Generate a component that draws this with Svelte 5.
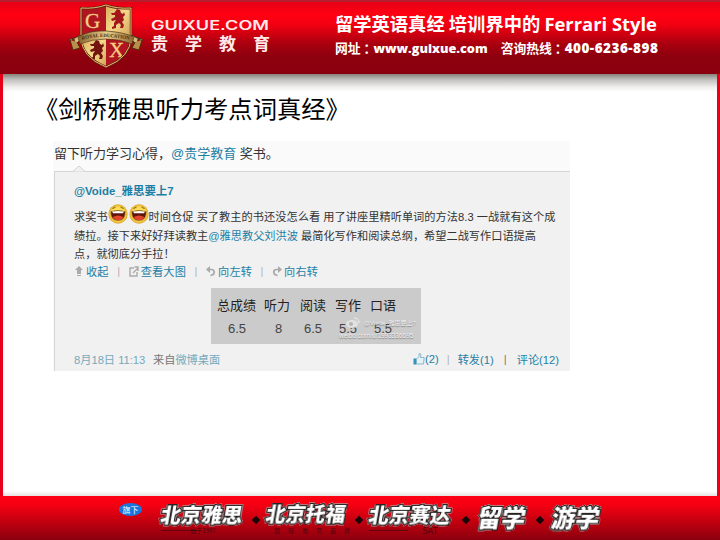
<script lang="ts">
  type Score = { label: string; value: string; width: number };
  type Course = { name: string; note: string; kind: string };

  const scores: Score[] = [
    { label: "总成绩", value: "6.5", width: 47 },
    { label: "听力", value: "8", width: 36 },
    { label: "阅读", value: "6.5", width: 35 },
    { label: "写作", value: "5.5", width: 35 },
    { label: "口语", value: "5.5", width: 35 },
  ];

  const courses: Course[] = [
    { name: "北京雅思", note: "始于1997", kind: "ielts" },
    { name: "北京托福", note: "国际教育品牌", kind: "toefl" },
    { name: "北京赛达", note: "SAT", kind: "sat" },
    { name: "留学", note: "", kind: "big" },
    { name: "游学", note: "", kind: "big" },
  ];
</script>

{#snippet lion(x: number, y: number)}
  <path
    transform="translate({x} {y})"
    d="M5 0l3 1 1 3 2 1 1-2 1 3-2 2 1 3-2 2 2 3-1 3-3 0 1-3-2-2-3 2 0 3-4 1 0-2 2-1 0-3 2-3-4 1-1-2 2-1 2-1 0-2-3 0-1-2 3 0 1-1z"
  />
{/snippet}

{#snippet laugh()}
  <svg class="face" width="20" height="20" viewBox="0 0 20 20">
    <circle cx="10" cy="10" r="9.700" fill="url(#skin)" />
    <path d="M4.500 4.500l3-1.300M15.500 4.500l-3-1.300" fill="none" stroke="#8a5a18" stroke-width="1" />
    <path d="M2.800 7.500Q10 5.500 17.200 7.500 17.500 16.500 10 16.500T2.800 7.500z" fill="#5f150c" stroke="#a0701c" stroke-width=".6" />
    <path d="M4 7.600Q10 6.200 16 7.600L15 9.200H5z" fill="#fff" />
    <path d="M4.800 13q5.200-3 10.400 0-1.500 3.200-5.200 3.200T4.800 13z" fill="#e2452c" />
  </svg>
{/snippet}

<div class="page">
  <header>
    <svg class="crest" width="76" height="66" viewBox="0 0 76 66">
      <defs>
        <linearGradient id="gold" x2="1" y2="1">
          <stop offset="0" stop-color="#b77d2b" />
          <stop offset=".5" stop-color="#f6d98a" />
          <stop offset="1" stop-color="#a66b22" />
        </linearGradient>
        <linearGradient id="ribbon">
          <stop offset="0" stop-color="#86622d" />
          <stop offset=".5" stop-color="#e9cf8a" />
          <stop offset="1" stop-color="#8c6732" />
        </linearGradient>
        <radialGradient id="skin">
          <stop offset="0" stop-color="#ffec70" />
          <stop offset=".7" stop-color="#fbdc50" />
          <stop offset="1" stop-color="#dba62b" />
        </radialGradient>
        <clipPath id="shield">
          <path d="M12 4Q26 5 37 1 48 5 62 4V33Q62 53 37 63 12 53 12 33z" />
        </clipPath>
      </defs>
      <g clip-path="url(#shield)">
        <path d="M12 0h25v32H12zM37 32h25v32H37z" fill="#b01520" />
        <path d="M37 0h25v32H37zM12 32h25v32H12z" fill="url(#gold)" />
        <g fill="#a3161b">{@render lion(43, 5)}</g>
        <g fill="#741410">{@render lion(22, 36)}</g>
        <text class="initial" x="16" y="24">G</text>
        <text class="initial" x="40" y="53">X</text>
      </g>
      <path d="M12 4Q26 5 37 1 48 5 62 4V33Q62 53 37 63 12 53 12 33z" fill="none" stroke="#64200f" stroke-width="2.4" />
      <path d="M12 4Q26 5 37 1 48 5 62 4V33Q62 53 37 63 12 53 12 33z" fill="none" stroke="#e5bd72" />
      <path d="M0 37l5-2 1 6 7-7-2-3-5 3-5 1zM74 37l-5-2-1 6-7-7 2-3 5 3 5 1z" fill="#d7bd7d" stroke="#4c2d15" />
      <path d="M1 36l3 10 7-2-3-6M73 36l-3 10-7-2 3-6" fill="#b88e49" stroke="#4c2d15" />
      <path d="M9 33Q20 26 37 27T65 33L63 40Q51 35 37 35T11 40z" fill="url(#ribbon)" stroke="#593815" stroke-width=".7" />
      <path id="arc" d="M13 36Q25 32.500 37 33T62 36" fill="none" />
      <text class="motto"><textPath href="#arc" textLength="48">ROYAL EDUCATION</textPath></text>
    </svg>
    <div class="brand">
      <svg class="domain_box" width="120" height="12" viewBox="0 0 120 12">
        <text class="domain" x="0" y="11.500" textLength="118" lengthAdjust="spacingAndGlyphs">GUIXUE.COM</text>
      </svg>
      <span class="brand_name">贵学教育</span>
    </div>
    <div class="slogan">
      <strong>留学英语真经 培训界中的 <span class="latin">Ferrari Style</span></strong>
      <p><span>网址<em>：</em><b>www.guixue.com</b></span><span>咨询热线<em>：</em><b class="phone">400-6236-898</b></span></p>
    </div>
  </header>

  <main>
    <h1>《剑桥雅思听力考点词真经》</h1>
    <section class="weibo">
      <p class="lead">留下听力学习心得，<a>@贵学教育</a> 奖书。</p>
      <article>
        <svg class="notch" width="12" height="7" viewBox="0 0 12 7">
          <path d="M0 6.5L6 1l6 5.5" fill="#f1f1f1" stroke="#d2d2d2" />
        </svg>
        <a class="author">@Voide_雅思要上7</a>
        <div class="post">
          <p class="first"><span>求奖书</span>{@render laugh()}{@render laugh()}<span class="fit">时间仓促 买了教主的书还没怎么看 用了讲座里精听单词的方法8.3 一战就有这个成</span></p>
          <p>绩拉。接下来好好拜读教主<a>@雅思教父刘洪波</a> 最简化写作和阅读总纲，希望二战写作口语提高</p>
          <p>点，就彻底分手拉！</p>
        </div>
        <div class="tools">
          <svg width="10" height="11" viewBox="0 0 10 11"><path d="M5 0l4 4H7v4H3V4H1zM3 9h4v1H3z" fill="#aaa" /></svg>
          <a>收起</a><i>|</i>
          <svg width="10" height="11" viewBox="0 0 10 11"><path d="M5 2H1v8h7V6M4 7l5-5M5.500 1H9v4" fill="none" stroke="#aaa" stroke-width="1.400" /></svg>
          <a>查看大图</a><i>|</i>
          <svg width="10" height="11" viewBox="0 0 10 11"><path d="M4 0v7L0 3.500z" fill="#aaa" /><path d="M3 3.500h2.500q2.700 0 2.700 2.700T4.500 9.500" fill="none" stroke="#aaa" stroke-width="1.700" /></svg>
          <a>向左转</a><i>|</i>
          <svg width="10" height="11" viewBox="0 0 10 11"><path d="M6 0v7l4-3.500z" fill="#aaa" /><path d="M7 3.500H4.500q-2.700 0-2.700 2.700T5.500 9.500" fill="none" stroke="#aaa" stroke-width="1.700" /></svg>
          <a>向右转</a>
        </div>
        <div class="scores">
          {#each scores as score}
            <div class="score" style="width: {score.width}px">
              <span>{score.label}</span>
              <span class="value">{score.value}</span>
            </div>
          {/each}
          <div class="watermark">
            <span><svg width="15" height="12" viewBox="0 0 15 12"><ellipse cx="7" cy="7" rx="6" ry="4" fill="#e2e2e2" /><circle cx="6" cy="7" r="2" fill="#b5b5b5" /><path d="M9 1q5 0 5 5" fill="none" stroke="#eee" /></svg>@Voide_雅思要上7</span>
            <small>weibo.com/u/1993336695</small>
          </div>
        </div>
        <footer class="meta">
          <span class="date">8月18日 11:13</span>
          <span class="source">来自<a>微博桌面</a></span>
          <span class="counts">
            <svg width="12" height="12" viewBox="0 0 12 12"><path d="M.5 5.500h3v6h-3z" fill="#3293b8" /><path d="M3.500 6L6 3.500V.7q2-.5 2 1.500L7.500 4.500h3.700L10.500 11h-7z" fill="#e5f2f5" stroke="#6eabc2" stroke-width=".8" /></svg>
            <a>(2)</a><i>|</i><a>转发(1)</a><i class="dark">|</i><a>评论(12)</a>
          </span>
        </footer>
      </article>
    </section>
  </main>

  <footer class="bar">
    <span class="badge">旗下</span>
    {#each courses as course, i}
      {#if i > 0}<span class="diamond"></span>{/if}
      <div class="course {course.kind}">
        <b>{course.name}</b>
        {#if course.note}<small>{course.note}</small>{/if}
      </div>
    {/each}
  </footer>
</div>

<style>
  :global(body) {
    margin: 0;
  }

  .page {
    width: 720px;
    height: 540px;
    display: flex;
    flex-direction: column;
    overflow: hidden;
    font-family: "Liberation Sans", "Noto Sans CJK SC", sans-serif;
    white-space: nowrap;
  }

  p,
  h1 {
    margin: 0;
    font-weight: normal;
  }

  svg {
    display: block;
    flex: none;
  }

  header {
    box-sizing: border-box;
    height: 74px;
    flex: none;
    display: flex;
    align-items: flex-start;
    padding: 4px 0 0 69px;
    border-top: 2px solid #b51e2d;
    background: linear-gradient(#e50016, #ff0012 12px, #f40012 22px, #a9000f 42px, #8e000e 54px, #8b000e);
    color: #fff;
  }

  .crest {
    margin-top: -2px;
  }

  .initial {
    font: 21px "Liberation Serif", serif;
    fill: #f3cf82;
    stroke: #f3cf82;
    stroke-width: 0.3px;
  }

  .motto {
    font: bold 5px "Liberation Serif", serif;
    fill: #4a2d0c;
  }

  .brand {
    width: 125px;
    padding: 12px 0 0 6px;
    display: flex;
    flex-direction: column;
  }

  .domain_box {
    overflow: visible;
  }

  .domain {
    font: 600 12.5px Inter, sans-serif;
    fill: #ffe9e9;
  }

  .brand_name {
    margin-top: 2px;
    font: bold 17px/22px "Noto Sans CJK SC", sans-serif;
    letter-spacing: 17px;
    color: #ffe9e9;
  }

  .slogan {
    margin-left: 59px;
    padding-top: 5px;
    font-family: "Noto Sans CJK SC", sans-serif;

    strong {
      display: block;
      font-size: 18.3px;
      line-height: 24px;
    }

    .latin {
      font-family: "Open Sans", sans-serif;
      font-size: 18.4px;
    }

    p {
      display: flex;
      gap: 13px;
      font-size: 12.8px;
      font-weight: bold;
      line-height: 24px;
    }

    b {
      font-family: "Open Sans", sans-serif;
      font-size: 12.7px;
    }

    /* full-width colon sits low left in this face, nudge it to the middle */
    em {
      position: relative;
      left: 3px;
      font-style: normal;
    }

    .phone {
      font-size: 13.5px;
      letter-spacing: 0.5px;
    }
  }

  main {
    box-sizing: border-box;
    height: 422px;
    flex: none;
    padding: 17px 0 0 31px;
    border: solid #e8001a;
    border-width: 0 3px;
    background:
      linear-gradient(#85817b, #bdbbb8 5px, #efeeed 13px, #fff 18px) top / 100% 18px no-repeat,
      linear-gradient(#fff, #e8e2e2) bottom / 100% 5px no-repeat,
      #fff;
  }

  h1 {
    font: 24.3px/34px "Noto Sans CJK SC", sans-serif;
    color: #000;
  }

  .weibo {
    width: 517px;
    margin: 16px 0 0 19px;
    background: #fafafa;
    font-size: 11.2px;
    color: #333;
  }

  a {
    color: #1e7fa5;
  }

  i {
    font-style: normal;
    color: #b5b5b5;
  }

  .lead {
    height: 30px;
    box-sizing: border-box;
    padding-left: 1px;
    font-size: 13px;
    line-height: 25px;
  }

  article {
    position: relative;
    box-sizing: border-box;
    height: 200px;
    margin-left: 1px;
    padding: 9px 0 0 19px;
    border: 1px solid #d5d5d5;
    border-width: 1px 0 0 1px;
    background: #f1f1f1;
  }

  .notch {
    position: absolute;
    left: 18px;
    top: -7px;
  }

  .author {
    display: block;
    height: 27px;
    font-size: 11.4px;
    font-weight: bold;
    line-height: 20px;
  }

  .post p {
    height: 18px;
    line-height: 20px;
  }

  .first {
    display: flex;
    align-items: center;
  }

  .face {
    margin: -6px 0 0 0.5px;
  }

  .fit {
    letter-spacing: 0.04px;
  }

  .tools {
    display: flex;
    align-items: center;
    height: 18px;

    a {
      margin-left: 2px;
      letter-spacing: 0.15px;
    }

    i {
      width: 20px;
      text-align: center;
    }
  }

  .scores {
    position: relative;
    box-sizing: border-box;
    width: 210px;
    height: 56px;
    margin: 8px 0 0 137px;
    padding: 6px 0 0 6px;
    display: flex;
    background: #cbcbcb;
  }

  .score {
    flex: none;
    display: flex;
    flex-direction: column;
    color: #222;
    font-size: 13px;
    line-height: 23px;
  }

  .value {
    padding-left: 11px;
    color: #444;
  }

  .score:nth-child(n + 3) .value {
    padding-left: 4px;
  }

  .watermark {
    position: absolute;
    left: 128px;
    top: 29px;
    color: #f2f2f2;
    text-shadow: 0 1px 1px #777;
    font-size: 6px;
    line-height: 13px;

    span {
      display: flex;
      gap: 4px;
      margin-left: 6px;
    }

    small {
      display: block;
      margin-top: 1px;
      font-size: 6.5px;
      line-height: 9px;
    }
  }

  .meta {
    display: flex;
    align-items: center;
    height: 18px;
    margin-top: 6px;

    .date {
      width: 79px;
      color: #75a9bc;
    }

    .source {
      color: #777;
    }

    .source a {
      color: #75a9bc;
    }
  }

  .counts {
    display: flex;
    align-items: center;
    margin: 0 11px 0 auto;

    i {
      width: 19px;
      text-align: center;
    }

    .dark {
      width: 23px;
      color: #777;
    }
  }

  .bar {
    box-sizing: border-box;
    height: 44px;
    flex: none;
    display: flex;
    align-items: flex-start;
    padding: 6px 0 0 119px;
    background: linear-gradient(#ff0014, #f50012 9px, #8a000d);
    font-family: "Noto Sans CJK SC", sans-serif;
  }

  .badge {
    width: 23px;
    height: 13px;
    margin: 1px 19px 0 0;
    border-radius: 50%;
    background: #1976df;
    color: #fff;
    font-size: 8px;
    line-height: 13px;
    text-align: center;
  }

  .course {
    width: 82px;
    display: flex;
    flex-direction: column;

    b {
      font-size: 20.5px;
      font-weight: 900;
      line-height: 24px;
      color: #fff;
      -webkit-text-stroke: 2.6px #252020;
      paint-order: stroke fill;
      filter: drop-shadow(0 0 0.5px #fff) drop-shadow(0 0 0.5px #fff);
      transform: skewX(-10deg);
    }

    small {
      font-size: 6px;
      line-height: 9px;
      color: #4a0810;
      text-align: center;
    }
  }

  .ielts {
    width: 84px;
  }

  .toefl small {
    letter-spacing: 8px;
    padding-left: 8px;
  }

  .toefl b {
    font-size: 19.9px;
  }

  .sat small {
    font-size: 9px;
    padding-left: 40px;
  }

  .ielts small,
  .sat small {
    background: linear-gradient(#5c0710, #5c0710) left center / 48% 1px no-repeat;
  }

  .big {
    width: 51px;
    padding-top: 2px;

    b {
      font-size: 24px;
      line-height: 26px;
    }
  }

  .diamond {
    width: 6px;
    height: 6px;
    margin: 15px 7px 0 8px;
    background: #180507;
    transform: rotate(45deg);
  }

  .sat + .diamond {
    margin-right: 9px;
    margin-left: 12px;
  }

  .big + .diamond {
    margin-right: 9px;
  }
</style>
